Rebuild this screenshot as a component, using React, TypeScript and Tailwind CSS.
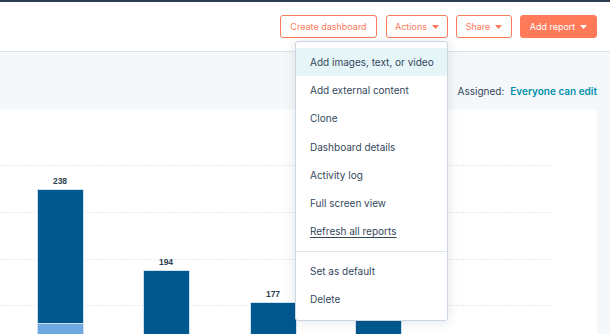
import * as React from "react";

const MENU: { label: string; active?: boolean; underline?: boolean }[] = [
  { label: "Add images, text, or video", active: true },
  { label: "Add external content" },
  { label: "Clone" },
  { label: "Dashboard details" },
  { label: "Activity log" },
  { label: "Full screen view" },
  { label: "Refresh all reports", underline: true },
];

const BARS = [
  { x: 37, top: 80, light: 214, label: "238" },
  { x: 143, top: 161, label: "194" },
  { x: 250, top: 193, label: "177" },
  { x: 355, top: 210, label: "171" },
];

function Caret({ className }: { className: string }) {
  return (
    <svg width="7" height="4" viewBox="0 0 7 4" className={className}>
      <path d="M0 0h7L3.5 4z" fill="currentColor" />
    </svg>
  );
}

function Chart() {
  return (
    <svg width="597" height="225" className="block">
      {[56, 103, 150, 196].map((y) => (
        <line
          key={y}
          x1="0"
          x2="553"
          y1={y + 0.5}
          y2={y + 0.5}
          stroke="#e6ebf1"
          strokeDasharray="2 1"
        />
      ))}
      {BARS.map((b) => (
        <g key={b.x}>
          <rect
            x={b.x + 0.5}
            y={b.top + 0.5}
            width="46"
            height={230 - b.top}
            fill="#00588f"
            stroke="#cfe0ef"
            strokeWidth="1"
          />
          {b.light ? (
            <rect
              x={b.x + 0.5}
              y={b.light + 0.5}
              width="46"
              height="20"
              fill="#6ea9e1"
              stroke="#cfe0ef"
            />
          ) : null}
          <text
            x={b.x + 23}
            y={b.top - 5}
            textAnchor="middle"
            fontSize="8.5"
            fontWeight="700"
            fill="#2d3e50"
            fontFamily="Liberation Sans, Arial, sans-serif"
          >
            {b.label}
          </text>
        </g>
      ))}
    </svg>
  );
}

export default function App() {
  return (
    <div className="relative h-[334px] w-[610px] overflow-hidden bg-white font-['Inter',sans-serif] text-[#33475b]">
      <div className="h-[2px] bg-[#2d3e50]" />

      <div className="flex h-[50px] items-center justify-end border-b border-[#dfe3eb] pr-[13px]">
        <button className="h-[23px] w-[97px] whitespace-nowrap rounded-[3px] border border-[#ff7a59] bg-white text-[9px] text-[#ff7a59]">
          Create dashboard
        </button>
        <button className="ml-[9px] flex h-[23px] w-[62px] items-center justify-center gap-[5px] rounded-[3px] border border-[#ff7a59] bg-white text-[9px] text-[#ff7a59]">
          Actions <Caret className="text-[#ff7a59]" />
        </button>
        <button className="ml-[8px] flex h-[23px] w-[56px] items-center justify-center gap-[5px] rounded-[3px] border border-[#ff7a59] bg-white text-[9px] text-[#ff7a59]">
          Share <Caret className="text-[#ff7a59]" />
        </button>
        <button className="ml-[8px] flex h-[23px] w-[77px] items-center justify-center gap-[5px] rounded-[3px] border border-[#ff7a59] bg-[#ff7a59] text-[9px] text-white">
          Add report <Caret className="text-white" />
        </button>
      </div>

      <div className="h-[282px] bg-[#f5f8fa] pr-[13px]">
        <div className="flex h-[57px] items-center justify-end whitespace-nowrap pt-[21px] text-[10px]">
          <span>Assigned:</span>
          <span className="ml-[6px] font-semibold text-[#0091ae]">Everyone can edit</span>
        </div>
        <div className="h-[225px] rounded-tr-[3px] bg-white">
          <Chart />
        </div>
      </div>

      <div className="absolute left-[295px] top-[41px] w-[153px] rounded-[3px] border border-[#cbd6e2] bg-white py-[6px] shadow-[0_1px_12px_rgba(45,62,80,0.14)]">
        {MENU.map((m) => (
          <div
            key={m.label}
            className={
              "flex h-[28.3px] items-center whitespace-nowrap px-[14px] text-[10px] " +
              (m.active ? "bg-[#e5f5f8]" : "")
            }
          >
            <span className={m.underline ? "underline underline-offset-2" : ""}>{m.label}</span>
          </div>
        ))}
        <div className="my-[5px] border-t border-[#dfe3eb]" />
        {["Set as default", "Delete"].map((l) => (
          <div key={l} className="flex h-[28.5px] items-center whitespace-nowrap px-[14px] text-[10px]">
            {l}
          </div>
        ))}
      </div>
    </div>
  );
}
